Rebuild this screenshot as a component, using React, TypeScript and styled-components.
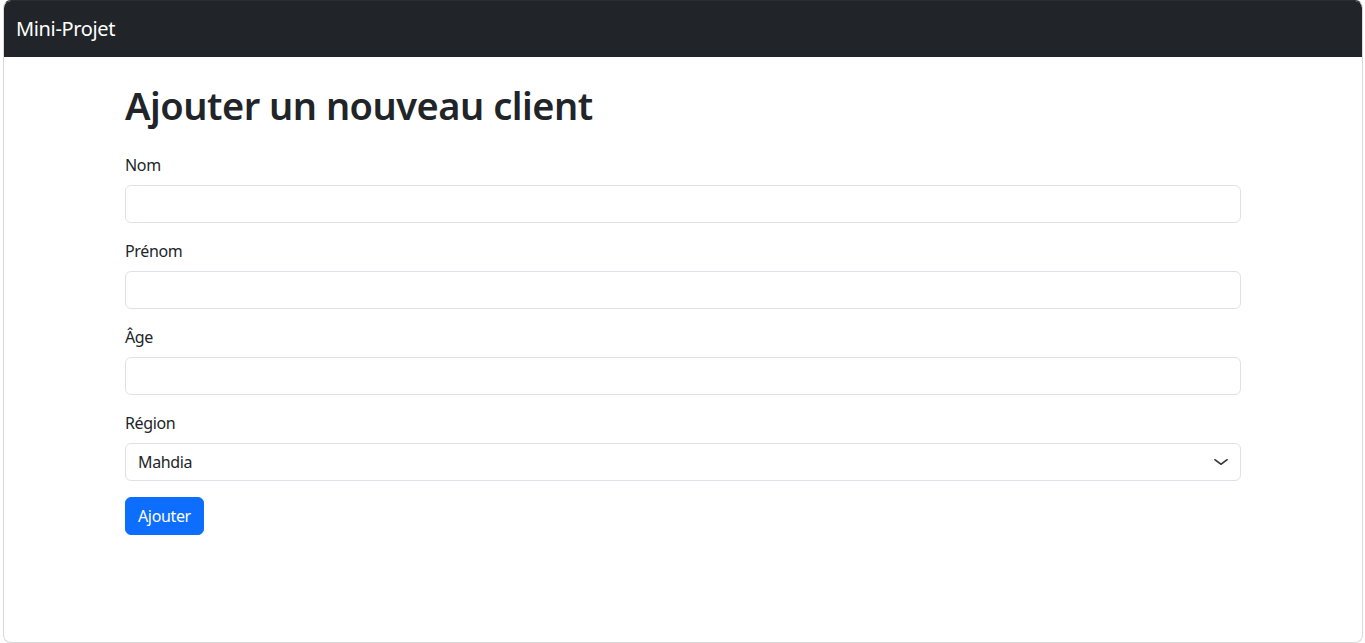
import React from "react";
import styled, { createGlobalStyle } from "styled-components";

const Global = createGlobalStyle`
  html, body { margin: 0; padding: 0; background: #ffffff; }
  body {
    font-family: "Noto Sans", "Open Sans", sans-serif;
    font-size: 16px;
    line-height: 1.5;
    color: #212529;
    letter-spacing: -0.35px;
  }
  * { box-sizing: border-box; }
`;

const Frame = styled.div`
  margin-left: 3px;
  width: 1360px;
  height: 643px;
  border: 1px solid #d9d9d9;
  border-top-color: #2a2d31;
  border-radius: 8px;
  overflow: hidden;
  background: #fff;
  display: flex;
  flex-direction: column;
`;

const Navbar = styled.nav`
  height: 56px;
  flex: none;
  background: #212529;
  display: flex;
  align-items: center;
  padding: 0 12px;
`;

const Brand = styled.a`
  color: #fff;
  font-size: 20px;
  line-height: 30px;
  text-decoration: none;
`;

const Container = styled.main`
  width: 100%;
  max-width: 1140px;
  margin: 24px auto 0;
  padding: 0 12px;
`;

const Title = styled.h1`
  margin: 0 0 24px;
  font-size: 38px;
  line-height: 48px;
  font-weight: 600;
  letter-spacing: -0.5px;
  color: #212529;
`;

const Form = styled.form`
  display: flex;
  flex-direction: column;
  align-items: flex-start;
`;

const Group = styled.div`
  width: 100%;
  margin-bottom: 16px;
`;

const Label = styled.label`
  display: block;
  margin-bottom: 8px;
  font-size: 16px;
  line-height: 24px;
`;

const fieldBase = `
  display: block;
  width: 100%;
  height: 38px;
  padding: 6px 12px;
  font-family: inherit;
  font-size: 16px;
  line-height: 24px;
  letter-spacing: inherit;
  color: #212529;
  background: #fff;
  border: 1px solid #dee2e6;
  border-radius: 6px;
  outline: none;
`;

const Input = styled.input`
  ${fieldBase}
`;

const SelectWrap = styled.div`
  position: relative;
  width: 100%;
`;

const Select = styled.select`
  ${fieldBase}
  appearance: none;
  padding-right: 36px;
`;

const Chevron = styled.svg`
  position: absolute;
  right: 12px;
  top: 13px;
  width: 16px;
  height: 12px;
  pointer-events: none;
`;

const Button = styled.button`
  font-family: inherit;
  font-size: 16px;
  line-height: 24px;
  letter-spacing: inherit;
  padding: 6px 12px;
  color: #fff;
  background: #0d6efd;
  border: 1px solid #0d6efd;
  border-radius: 6px;
  cursor: pointer;
`;

export default function App() {
  return (
    <>
      <Global />
      <Frame>
        <Navbar>
          <Brand href="#">Mini-Projet</Brand>
        </Navbar>
        <Container>
          <Title>Ajouter un nouveau client</Title>
          <Form onSubmit={(e) => e.preventDefault()}>
            <Group>
              <Label htmlFor="nom">Nom</Label>
              <Input id="nom" type="text" />
            </Group>
            <Group>
              <Label htmlFor="prenom">Prénom</Label>
              <Input id="prenom" type="text" />
            </Group>
            <Group>
              <Label htmlFor="age">Âge</Label>
              <Input id="age" type="text" />
            </Group>
            <Group>
              <Label htmlFor="region">Région</Label>
              <SelectWrap>
                <Select id="region" defaultValue="Mahdia">
                  <option>Mahdia</option>
                  <option>Tunis</option>
                  <option>Sousse</option>
                  <option>Sfax</option>
                </Select>
                <Chevron viewBox="0 0 16 16" preserveAspectRatio="none">
                  <path d="m2 5 6 6 6-6" fill="none" stroke="#343a40" strokeWidth="2" strokeLinecap="round" strokeLinejoin="round" />
                </Chevron>
              </SelectWrap>
            </Group>
            <Button type="submit">Ajouter</Button>
          </Form>
        </Container>
      </Frame>
    </>
  );
}
